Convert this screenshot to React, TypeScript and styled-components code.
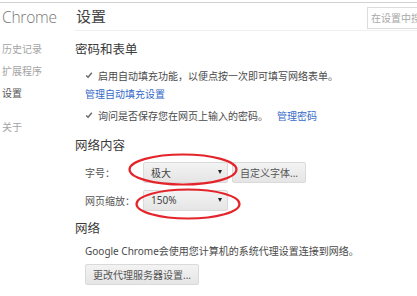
import styled, { createGlobalStyle } from "styled-components"

const GlobalStyle = createGlobalStyle`
    html, body {
        margin: 0;
        padding: 0;
        background: #fff;
    }
    body {
        width: 417px;
        height: 296px;
        overflow: hidden;
        font-family: "Noto Sans", "Noto Sans CJK SC", sans-serif;
        color: #333;
    }
`

type EllipseProps = {
    $top: number
    $left: number
    $w: number
    $h: number
}

const Ellipse = ({ $top, $left, $w, $h }: EllipseProps) => (
    <Circle $top={$top} $left={$left} $w={$w} $h={$h} viewBox={`0 0 ${$w} ${$h}`}>
        <ellipse
            cx={$w / 2}
            cy={$h / 2}
            rx={$w / 2 - 1.5}
            ry={$h / 2 - 1.5}
            fill="none"
            stroke="#e4242b"
            strokeWidth={2.2}
        />
    </Circle>
)

const Check = () => (
    <CheckIcon viewBox="0 0 8 8">
        <path d="M1.2 4.4 L3.1 6.2 L6.8 1.8" fill="none" stroke="#666" strokeWidth={1.4} />
    </CheckIcon>
)

export default function App() {
    return (
        <Page>
            <GlobalStyle />
            <Layout>
                <Sidebar>
                    <Brand>Chrome</Brand>
                    <Nav>
                        <NavItem>历史记录</NavItem>
                        <NavItem>扩展程序</NavItem>
                        <NavItem $active>设置</NavItem>
                        <NavItem $gap={12}>关于</NavItem>
                    </Nav>
                </Sidebar>
                <Main>
                    <Header>
                        <Title>设置</Title>
                        <Search placeholder="在设置中搜索" />
                    </Header>

                    <Section $top={9}>
                        <Heading>密码和表单</Heading>
                        <Body $top={4}>
                            <CheckRow>
                                <Check />
                                <Text>启用自动填充功能，以便点按一次即可填写网络表单。</Text>
                            </CheckRow>
                            <LinkRow>管理自动填充设置</LinkRow>
                            <CheckRow $top={2}>
                                <Check />
                                <Text>询问是否保存您在网页上输入的密码。</Text>
                                <Link>管理密码</Link>
                            </CheckRow>
                        </Body>
                    </Section>

                    <Section $top={10}>
                        <Heading>网络内容</Heading>
                        <Body $top={5}>
                            <FieldRow>
                                <Label>字号：</Label>
                                <SelectWrap>
                                    <Select>
                                        <span>极大</span>
                                        <Arrow />
                                    </Select>
                                    <Ellipse $top={-9} $left={-15} $w={110} $h={33} />
                                </SelectWrap>
                                <Button $left={4}>自定义字体...</Button>
                            </FieldRow>
                            <FieldRow $top={6}>
                                <Label>网页缩放：</Label>
                                <SelectWrap>
                                    <Select>
                                        <span>150%</span>
                                        <Arrow />
                                    </Select>
                                    <Ellipse $top={-2} $left={-8} $w={106} $h={32} />
                                </SelectWrap>
                            </FieldRow>
                        </Body>
                    </Section>

                    <Section $top={8}>
                        <Heading>网络</Heading>
                        <Body $top={4}>
                            <Note>Google Chrome会使用您计算机的系统代理设置连接到网络。</Note>
                            <Button $top={5}>更改代理服务器设置...</Button>
                        </Body>
                    </Section>
                </Main>
            </Layout>
        </Page>
    )
}

const Page = styled.div`
    padding-top: 2px;
`

const Layout = styled.div`
    display: grid;
    grid-template-columns: 75px 1fr;
    border-top: 1px solid #d2d2d2;
`

const Sidebar = styled.div`
    display: flex;
    flex-direction: column;
    padding-left: 2px;
`

const Brand = styled.div`
    height: 27px;
    display: flex;
    align-items: center;
    font-family: "Open Sans", sans-serif;
    font-weight: 300;
    font-size: 15.5px;
    color: #767676;
    letter-spacing: -0.2px;
`

const Nav = styled.div`
    display: flex;
    flex-direction: column;
    margin-top: 8px;
`

const NavItem = styled.div<{ $active?: boolean; $gap?: number }>`
    height: 22px;
    line-height: 22px;
    font-size: 10px;
    margin-top: ${(p) => p.$gap ?? 0}px;
    color: ${(p) => (p.$active ? "#555" : "#a4a4a4")};
`

const Main = styled.div`
    display: flex;
    flex-direction: column;
    min-width: 0;
`

const Header = styled.div`
    height: 27px;
    display: flex;
    justify-content: space-between;
    border-bottom: 1px solid #f0f0f0;
`

const Title = styled.div`
    font-size: 15px;
    line-height: 27px;
    color: #444;
    margin-left: 1px;
`

const Search = styled.input`
    box-sizing: border-box;
    width: 60px;
    height: 22px;
    margin-top: 4px;
    margin-right: -10px;
    padding: 0 3px;
    border: 1px solid #dcdcdc;
    outline: none;
    font-family: "Noto Sans", "Noto Sans CJK SC", sans-serif;
    font-size: 10px;
    &::placeholder {
        color: #a8a8a8;
    }
`

const Section = styled.div<{ $top: number }>`
    display: flex;
    flex-direction: column;
    margin-top: ${(p) => p.$top}px;
`

const Heading = styled.div`
    height: 20px;
    line-height: 20px;
    font-size: 12.5px;
    color: #3a3a3a;
`

const Body = styled.div<{ $top: number }>`
    display: flex;
    flex-direction: column;
    align-items: flex-start;
    padding-left: 10px;
    margin-top: ${(p) => p.$top}px;
`

const CheckRow = styled.div<{ $top?: number }>`
    height: 22px;
    display: flex;
    align-items: center;
    gap: 5px;
    margin-top: ${(p) => p.$top ?? 0}px;
`

const CheckIcon = styled.svg`
    width: 8px;
    height: 8px;
`

const Text = styled.span`
    font-size: 10px;
    color: #4a4a4a;
    white-space: nowrap;
`

const Link = styled.span`
    font-size: 10px;
    color: #3469c8;
    margin-left: 4px;
`

const LinkRow = styled.div`
    height: 16px;
    line-height: 16px;
    font-size: 10px;
    color: #3469c8;
`

const FieldRow = styled.div<{ $top?: number }>`
    height: 22px;
    display: flex;
    align-items: center;
    margin-top: ${(p) => p.$top ?? 0}px;
`

const Label = styled.div`
    width: 58px;
    font-size: 10px;
    color: #555;
`

const SelectWrap = styled.div`
    position: relative;
    width: 85px;
    height: 21px;
`

const Select = styled.div`
    box-sizing: border-box;
    height: 100%;
    display: flex;
    align-items: center;
    justify-content: space-between;
    padding: 0 5px 0 7px;
    border: 1px solid #dadada;
    border-radius: 2px;
    background: linear-gradient(#f3f3f3, #e5e5e5);
    font-size: 10px;
    color: #444;
`

const Arrow = styled.span`
    width: 0;
    height: 0;
    border-left: 2.5px solid transparent;
    border-right: 2.5px solid transparent;
    border-top: 4px solid #222;
`

const Circle = styled.svg<EllipseProps>`
    position: absolute;
    top: ${(p) => p.$top}px;
    left: ${(p) => p.$left}px;
    width: ${(p) => p.$w}px;
    height: ${(p) => p.$h}px;
    z-index: 1;
    pointer-events: none;
`

const Button = styled.div<{ $top?: number; $left?: number }>`
    box-sizing: border-box;
    height: 21px;
    display: flex;
    align-items: center;
    padding: 0 7px;
    margin-top: ${(p) => p.$top ?? 0}px;
    margin-left: ${(p) => p.$left ?? 0}px;
    border: 1px solid #dadada;
    border-radius: 2px;
    background: linear-gradient(#f3f3f3, #e5e5e5);
    font-size: 10px;
    color: #555;
    white-space: nowrap;
`

const Note = styled.div`
    height: 16px;
    line-height: 16px;
    font-size: 10px;
    color: #4a4a4a;
    white-space: nowrap;
`
